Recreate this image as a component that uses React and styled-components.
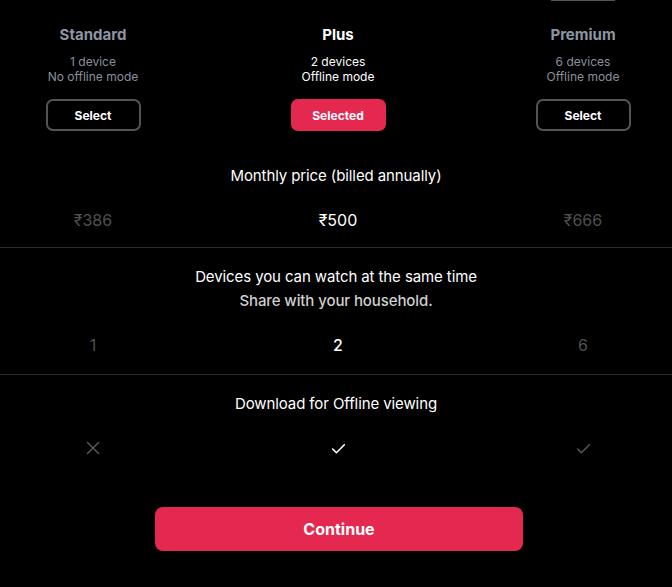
import React from 'react';
import styled, { createGlobalStyle } from 'styled-components';

const GlobalStyle = createGlobalStyle`
    html, body {
        margin: 0;
        padding: 0;
        background-color: #000;
        overflow: hidden;
    }
    * {
        box-sizing: border-box;
    }
`
const Page = styled.div`
    width: 672px;
    height: 587px;
    background-color: #000;
    color: #fff;
    font-family: Inter, Roboto, "Liberation Sans", Arial, sans-serif;
`
const Columns = styled.div`
    display: grid;
    grid-template-columns: repeat(3, 176px);
    column-gap: 69px;
    padding-left: 5px;
`
const Stub = styled.div`
    grid-column: 3;
    justify-self: center;
    width: 64px;
    height: 1px;
    background-color: #555;
`
const Plan = styled.div`
    display: flex;
    flex-direction: column;
    align-items: center;
    padding-top: 24px;
`
const PlanName = styled.div`
    font-size: 15px;
    line-height: 20px;
    font-weight: bold;
    color: ${p => p.$active ? '#fff' : '#8d95a4'};
`
const PlanInfo = styled.div`
    margin-top: 9px;
    font-size: 12px;
    line-height: 15px;
    text-align: center;
    color: ${p => p.$active ? '#fff' : '#8a909c'};
`
const SelectButton = styled.button`
    margin-top: 15px;
    width: 95px;
    height: 32px;
    border-radius: 7px;
    border: 2px solid ${p => p.$active ? '#e4284f' : '#545454'};
    background-color: ${p => p.$active ? '#e4284f' : 'transparent'};
    color: #fff;
    font-family: inherit;
    font-size: 12px;
    font-weight: bold;
    cursor: pointer;
`
const Section = styled.div`
    padding: ${p => p.$top || 19}px 0 ${p => p.$bottom || 19}px;
    border-bottom: ${p => p.$last ? 'none' : '1px solid #2b2b2b'};
    text-align: center;
`
const Heading = styled.div`
    font-size: 15px;
    line-height: 20px;
    color: #fff;
    letter-spacing: -0.1px;
`
const SubHeading = styled.div`
    margin-top: 4px;
    font-size: 15px;
    line-height: 20px;
    font-weight: 500;
    color: #cfcfcf;
    letter-spacing: -0.1px;
`
const ValueRow = styled(Columns)`
    margin-top: ${p => p.$gap || 24}px;
`
const Value = styled.div`
    display: flex;
    justify-content: center;
    align-items: center;
    height: 20px;
    font-size: 16px;
    color: ${p => p.$active ? '#fff' : '#505050'};
    font-weight: ${p => p.$bold ? 500 : 400};
`
const Footer = styled.div`
    display: flex;
    justify-content: center;
    padding: 30px 0 0 6px;
`
const ContinueButton = styled.button`
    width: 368px;
    height: 44px;
    border: none;
    border-radius: 8px;
    background-color: #e4284f;
    color: #fff;
    font-family: inherit;
    font-size: 16px;
    font-weight: bold;
    cursor: pointer;
`

const plans = [
    { name: 'Standard', devices: '1 device', offline: 'No offline mode', price: '₹386', count: '1', download: false },
    { name: 'Plus', devices: '2 devices', offline: 'Offline mode', price: '₹500', count: '2', download: true, active: true },
    { name: 'Premium', devices: '6 devices', offline: 'Offline mode', price: '₹666', count: '6', download: true },
];

const Cross = ({ color }) => (
    <svg width="16" height="16" viewBox="0 0 16 16" fill="none" stroke={color} strokeWidth="1.4" strokeLinecap="round">
        <path d="M2.5 2.5l11 11M13.5 2.5l-11 11" />
    </svg>
);

const Check = ({ color }) => (
    <svg width="17" height="17" viewBox="0 0 16 16" fill="none" stroke={color} strokeWidth="1.5" strokeLinecap="round" strokeLinejoin="round">
        <path d="M2.5 8.5l3.5 3.5 7.5-7.5" />
    </svg>
);

function App() {
    return (
        <Page>
            <GlobalStyle />
            <Columns>
                <Stub />
            </Columns>
            <Columns>
                {plans.map(p => (
                    <Plan key={p.name}>
                        <PlanName $active={p.active}>{p.name}</PlanName>
                        <PlanInfo $active={p.active}>{p.devices}<br />{p.offline}</PlanInfo>
                        <SelectButton $active={p.active}>{p.active ? 'Selected' : 'Select'}</SelectButton>
                    </Plan>
                ))}
            </Columns>
            <Section $top={35} $bottom={17}>
                <Heading>Monthly price (billed annually)</Heading>
                <ValueRow>
                    {plans.map(p => (
                        <Value key={p.name} $active={p.active}>{p.price}</Value>
                    ))}
                </ValueRow>
            </Section>
            <Section>
                <Heading>Devices you can watch at the same time</Heading>
                <SubHeading>Share with your household.</SubHeading>
                <ValueRow>
                    {plans.map(p => (
                        <Value key={p.name} $active={p.active} $bold={p.active}>{p.count}</Value>
                    ))}
                </ValueRow>
            </Section>
            <Section $last>
                <Heading>Download for Offline viewing</Heading>
                <ValueRow>
                    {plans.map(p => (
                        <Value key={p.name}>
                            {p.download
                                ? <Check color={p.active ? '#fff' : '#555'} />
                                : <Cross color="#5e5e5e" />}
                        </Value>
                    ))}
                </ValueRow>
            </Section>
            <Footer>
                <ContinueButton>Continue</ContinueButton>
            </Footer>
        </Page>
    );
}

export default App;
